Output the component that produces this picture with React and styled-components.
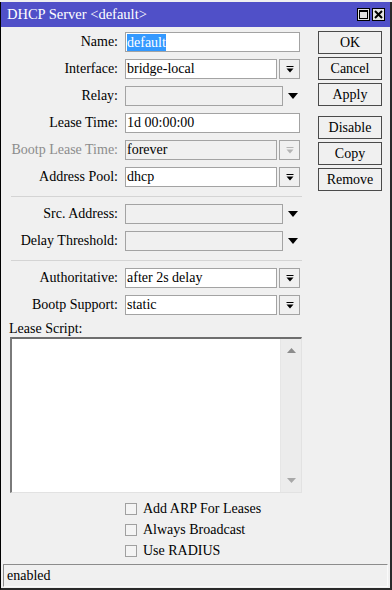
import React from "react";
import styled, { createGlobalStyle } from "styled-components";

const Global = createGlobalStyle`
  html, body { margin: 0; padding: 0; background: #f0f0f0; }
  body { font-family: "Liberation Serif", "Times New Roman", serif; font-size: 14px; color: #000; }
`;

const Window = styled.div`
  margin-top: 2px;
  width: 392px;
  height: 588px;
  box-sizing: border-box;
  border-left: 1px solid #000;
  border-right: 2px solid #2a2a2a;
  border-bottom: 2px solid #2a2a2a;
  background: #f0f0f0;
  display: flex;
  flex-direction: column;
`;

const TitleBar = styled.div`
  height: 25px;
  flex: none;
  background: #5050c8;
  display: flex;
  align-items: center;
  padding: 0 5px 0 6px;
`;

const Title = styled.div`
  flex: 1;
  color: #fff;
  font-size: 14.5px;
  line-height: 25px;
`;

const TitleBtn = styled.div`
  width: 13px;
  height: 13px;
  box-sizing: border-box;
  border: 1px solid #000;
  background: #e4e4e4;
  margin-left: 2px;
  display: flex;
  align-items: center;
  justify-content: center;
`;

const Body = styled.div`
  display: flex;
  padding-top: 5px;
`;

const Form = styled.div`
  width: 300px;
  display: flex;
  flex-direction: column;
  gap: 7px;
`;

const Row = styled.div`
  display: grid;
  grid-template-columns: 117px 175px;
  column-gap: 7px;
  height: 20px;
  align-items: center;
`;

const Label = styled.div`
  text-align: right;
  white-space: nowrap;
  color: ${(p) => (p.$disabled ? "#8c8c8c" : "#000")};
  line-height: 20px;
`;

const Field = styled.div`
  display: flex;
  height: 20px;
`;

const Input = styled.div`
  box-sizing: border-box;
  height: 20px;
  width: ${(p) => p.$w}px;
  border: 1px solid #a3a3a3;
  background: ${(p) => (p.$disabled ? "#f0f0f0" : "#fff")};
  padding-left: 1px;
  line-height: 18px;
  white-space: nowrap;
  overflow: hidden;
`;

const Selected = styled.span`
  background: #3399ff;
  color: #fff;
  display: inline-block;
  line-height: 17px;
  margin-top: 1px;
`;

const DropBtn = styled.div`
  box-sizing: border-box;
  width: 21px;
  height: 20px;
  margin-left: 2px;
  border: 1px solid #a3a3a3;
  background: #f0f0f0;
  display: flex;
  align-items: center;
  justify-content: center;
`;

const ArrowBox = styled.div`
  width: 17px;
  height: 20px;
  display: flex;
  align-items: center;
  padding-left: 5px;
  box-sizing: border-box;
`;

const Separator = styled.div`
  margin: 2px 0 0 10px;
  height: 1px;
  width: 291px;
  background: #d4d4d4;
`;

const ScriptBlock = styled.div`
  display: flex;
  flex-direction: column;
`;

const ScriptLabel = styled.div`
  padding-left: 8px;
  height: 15px;
  line-height: 14px;
`;

const TextArea = styled.div`
  margin-left: 9px;
  width: 292px;
  height: 156px;
  box-sizing: border-box;
  border-style: solid;
  border-width: 2px 1px 1px 2px;
  border-color: #6e6e6e #e2e2e2 #e2e2e2 #7a7a7a;
  background: #fff;
  display: flex;
  justify-content: flex-end;
`;

const ScrollBar = styled.div`
  width: 20px;
  background: #ececec;
  border-left: 1px solid #e6e6e6;
  display: flex;
  flex-direction: column;
  justify-content: space-between;
  align-items: center;
  padding: 9px 0 9px;
`;

const Buttons = styled.div`
  margin-left: 17px;
  margin-top: -1px;
  display: flex;
  flex-direction: column;
  gap: 3px;
`;

const Button = styled.div`
  box-sizing: border-box;
  width: 64px;
  height: 23px;
  border: 1px solid #4a4a4a;
  background: #f0f0f0;
  text-align: center;
  line-height: 21px;
  margin-top: ${(p) => (p.$gapTop ? "7px" : "0")};
`;

const Checks = styled.div`
  display: flex;
  flex-direction: column;
  padding-left: 124px;
  margin-top: 5px;
`;

const CheckRow = styled.div`
  display: flex;
  align-items: center;
  height: 21px;
`;

const Box = styled.div`
  width: 12px;
  height: 12px;
  box-sizing: border-box;
  border: 1px solid #a0a0a0;
  background: #f4f4f4;
  margin-right: 6px;
`;

const StatusBar = styled.div`
  margin: auto 2px 1px 2px;
  height: 23px;
  box-sizing: border-box;
  border-style: solid;
  border-width: 1px;
  border-color: #8c8c8c #fafafa #fafafa #8c8c8c;
  padding-left: 3px;
  line-height: 21px;
`;

const DropIcon = ({ disabled }) => (
  <svg width="8" height="7" viewBox="0 0 8 7">
    <rect x="0.5" y="0" width="7" height="1" fill={disabled ? "#b4b4b4" : "#000"} />
    <path d="M0.5 2.5 L7.5 2.5 L4 6.5 Z" fill={disabled ? "#b4b4b4" : "#000"} />
  </svg>
);

const Arrow = () => (
  <svg width="10" height="6" viewBox="0 0 10 6">
    <path d="M0 0 L10 0 L5 6 Z" fill="#000" />
  </svg>
);

const Combo = ({ value, disabled }) => (
  <Field>
    <Input $w={152} $disabled={disabled}>{value}</Input>
    <DropBtn>
      <DropIcon disabled={disabled} />
    </DropBtn>
  </Field>
);

const Optional = () => (
  <Field>
    <Input $w={158} $disabled />
    <ArrowBox>
      <Arrow />
    </ArrowBox>
  </Field>
);

const Check = ({ children }) => (
  <CheckRow>
    <Box />
    {children}
  </CheckRow>
);

export default function App() {
  return (
    <>
      <Global />
      <Window>
        <TitleBar>
          <Title>DHCP Server &lt;default&gt;</Title>
          <TitleBtn>
            <svg width="9" height="9" viewBox="0 0 9 9">
              <rect x="0.5" y="0.5" width="8" height="8" fill="none" stroke="#000" />
              <rect x="0" y="0" width="9" height="2" fill="#000" />
            </svg>
          </TitleBtn>
          <TitleBtn>
            <svg width="9" height="9" viewBox="0 0 9 9">
              <path d="M1 1 L8 8 M8 1 L1 8" stroke="#000" strokeWidth="2" />
            </svg>
          </TitleBtn>
        </TitleBar>
        <Body>
          <Form>
            <Row>
              <Label>Name:</Label>
              <Input $w={175}><Selected>default</Selected></Input>
            </Row>
            <Row>
              <Label>Interface:</Label>
              <Combo value="bridge-local" />
            </Row>
            <Row>
              <Label>Relay:</Label>
              <Optional />
            </Row>
            <Row>
              <Label>Lease Time:</Label>
              <Input $w={175}>1d 00:00:00</Input>
            </Row>
            <Row>
              <Label $disabled>Bootp Lease Time:</Label>
              <Combo value="forever" disabled />
            </Row>
            <Row>
              <Label>Address Pool:</Label>
              <Combo value="dhcp" />
            </Row>
            <Separator />
            <Row>
              <Label>Src. Address:</Label>
              <Optional />
            </Row>
            <Row>
              <Label>Delay Threshold:</Label>
              <Optional />
            </Row>
            <Separator />
            <Row>
              <Label>Authoritative:</Label>
              <Combo value="after 2s delay" />
            </Row>
            <Row>
              <Label>Bootp Support:</Label>
              <Combo value="static" />
            </Row>
            <ScriptBlock>
              <ScriptLabel>Lease Script:</ScriptLabel>
              <TextArea>
                <ScrollBar>
                  <svg width="9" height="5" viewBox="0 0 9 5">
                    <path d="M0 5 L9 5 L4.5 0 Z" fill="#8c8c8c" />
                  </svg>
                  <svg width="9" height="5" viewBox="0 0 9 5">
                    <path d="M0 0 L9 0 L4.5 5 Z" fill="#a8a8a8" />
                  </svg>
                </ScrollBar>
              </TextArea>
            </ScriptBlock>
          </Form>
          <Buttons>
            <Button>OK</Button>
            <Button>Cancel</Button>
            <Button>Apply</Button>
            <Button $gapTop>Disable</Button>
            <Button>Copy</Button>
            <Button>Remove</Button>
          </Buttons>
        </Body>
        <Checks>
          <Check>Add ARP For Leases</Check>
          <Check>Always Broadcast</Check>
          <Check>Use RADIUS</Check>
        </Checks>
        <StatusBar>enabled</StatusBar>
      </Window>
    </>
  );
}
